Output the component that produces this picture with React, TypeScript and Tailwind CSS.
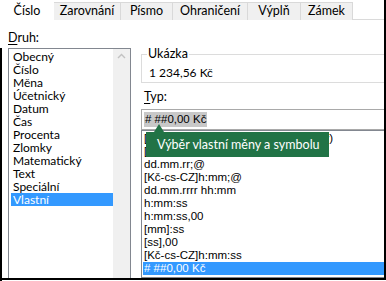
import React from "react";

const tabs = [
  { label: "Číslo", w: 54, active: true },
  { label: "Zarovnání", w: 68 },
  { label: "Písmo", w: 53 },
  { label: "Ohraničení", w: 76 },
  { label: "Výplň", w: 54 },
  { label: "Zámek", w: 53 },
];

const druh = [
  "Obecný",
  "Číslo",
  "Měna",
  "Účetnický",
  "Datum",
  "Čas",
  "Procenta",
  "Zlomky",
  "Matematický",
  "Text",
  "Speciální",
  "Vlastní",
];

const typy = [
  "[$-x-sysdate]dddd, dd. mmmm (yyyy)",
  "[$-x-systime]h:mm:ss AM/PM",
  "dd.mm.rr;@",
  "[Kč-cs-CZ]h:mm;@",
  "dd.mm.rrrr hh:mm",
  "h:mm:ss",
  "h:mm:ss,00",
  "[mm]:ss",
  "[ss],00",
  "[Kč-cs-CZ]h:mm:ss",
  "# ##0,00 Kč",
];

export default function App() {
  return (
    <div className="relative w-[386px] h-[281px] overflow-hidden bg-white font-['Lato',sans-serif] text-[12px] text-black">
      <div className="w-[386px] h-[280px] border-r-2 border-b-2 border-black flex flex-col">
        {/* tabs */}
        <div className="flex h-[20px] border-b border-[#dadada] shrink-0 text-[12.5px]">
          {tabs.map((t) =>
            t.active ? (
              <div
                key={t.label}
                style={{ width: t.w }}
                className="h-[21px] bg-white flex items-center justify-center pt-[1px] leading-none z-10"
              >
                {t.label}
              </div>
            ) : (
              <div
                key={t.label}
                style={{ width: t.w }}
                className="mt-[2px] h-[18px] bg-[#f0f0f0] border border-b-0 border-[#d9d9d9] -ml-px flex items-center justify-center leading-none"
              >
                {t.label}
              </div>
            )
          )}
        </div>

        {/* body */}
        <div className="flex flex-1 min-h-0 pl-[8px]">
          {/* left column */}
          <div className="w-[123px] flex flex-col">
            <div className="mt-[10px] h-[16px] leading-[16px] text-[12.5px]">
              <span className="underline underline-offset-2">D</span>ruh:
            </div>
            <div className="mt-[2px] flex-1 border border-[#828790] border-b-0 flex">
              <div className="flex-1 pl-[2px] pt-[1px]">
                {druh.map((d) => (
                  <div
                    key={d}
                    className={
                      "h-[13px] leading-[13px] pl-[2px] " +
                      (d === "Vlastní" ? "bg-[#3399ff] text-white" : "")
                    }
                  >
                    {d}
                  </div>
                ))}
              </div>
              <div className="w-[17px] bg-[#f0f0f0] flex justify-center pt-[4px]">
                <svg width="9" height="6" viewBox="0 0 9 6">
                  <path d="M1 5 L4.5 1.5 L8 5" fill="none" stroke="#c2c2c2" strokeWidth="1.4" />
                </svg>
              </div>
            </div>
          </div>

          {/* right column */}
          <div className="ml-[10px] flex-1 flex flex-col">
            <div className="mt-[34px] h-[29px] border border-r-0 border-[#dcdcdc] relative">
              <div className="absolute -top-[9px] left-[5px] px-[1px] bg-white leading-[16px] text-[12.5px]">Ukázka</div>
              <div className="pl-[7px] pt-[10px] leading-[16px]">1 234,56 Kč</div>
            </div>
            <div className="mt-[6px] h-[16px] leading-[16px] pl-[3px] text-[12.5px]">
              <span className="underline underline-offset-2">T</span>yp:
            </div>
            <div className="mt-[4px] h-[21px] border border-r-0 border-[#a9a9a9] flex items-center pl-[2px] font-['Liberation_Sans',sans-serif] text-[11.5px]">
              <span className="bg-[#c8c8c8] leading-[15px] px-[1px]">#&nbsp;##0,00 Kč</span>
            </div>
            <div className="h-[148px] border border-r-0 border-[#828790] pt-[1px] pl-[1px] font-['Liberation_Sans',sans-serif] text-[11.5px]">
              {typy.map((t, i) => (
                <div
                  key={i}
                  className={
                    "h-[13px] leading-[13px] pl-[1px] whitespace-pre " +
                    (i === typy.length - 1 ? "bg-[#3399ff] text-white" : "")
                  }
                >
                  {t}
                </div>
              ))}
            </div>
          </div>
        </div>
      </div>

      {/* dialog frame edge on the left */}
      <div className="absolute left-0 top-[48px] bottom-0 w-[2px] bg-black" />

      {/* tooltip */}
      <div className="absolute left-[146px] top-[132px] w-[183px] h-[25px] bg-[#217346] text-white text-[12.5px] leading-[25px] pl-[11px] whitespace-nowrap">
        Výběr vlastní měny a symbolu
        <div className="absolute left-[8px] -top-[8px] w-0 h-0 border-l-[5px] border-r-[5px] border-b-[8px] border-l-transparent border-r-transparent border-b-[#217346]" />
      </div>
    </div>
  );
}
